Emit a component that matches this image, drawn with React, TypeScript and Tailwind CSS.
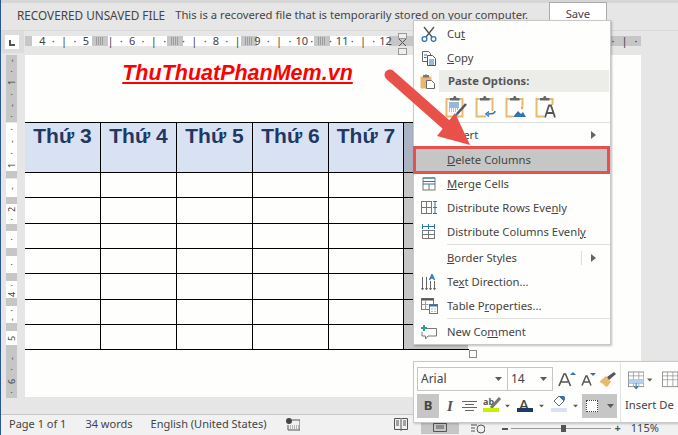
import React from "react";

const ui = "font-['Noto_Sans',sans-serif]";

const hSegs = [
  { left: "w-[60px]", tokens: ["4", "·", "|", "·", "5"], pad: "pl-[5px]" },
  { left: "w-[59px]", tokens: ["|", "·", "6", "·", "|", "·"], pad: "-ml-[3px]" },
  { left: "w-[58px]", tokens: ["·", "|", "·", "8", "·", "|"], pad: "-ml-[5px]" },
  { left: "w-[57px]", tokens: ["9", "·", "|", "·", "10", "·"], pad: "-ml-[5px]" },
  { left: "w-[59px]", tokens: ["·", "11", "·", "|", "·", "12"], pad: "-ml-[5px]" },
];

const vSegs = [
  { cls: "h-[67px] bg-[#c6c6c6]", t: ["-", "·", "1", "·", "-", "·"] },
  { cls: "h-[48px] mt-px bg-white", t: ["·", "-", "·", "1"] },
  { cls: "h-[7px] bg-[#c6c6c6]", t: [] },
  { cls: "h-[18px] mt-px bg-white", t: ["-"] },
  { cls: "h-[7px] bg-[#c6c6c6]", t: [] },
  { cls: "h-[20px] bg-white", t: ["2", "·"] },
  { cls: "h-[7px] bg-[#c6c6c6]", t: [] },
  { cls: "h-[17px] bg-white", t: ["·"] },
  { cls: "h-[8px] bg-[#c6c6c6]", t: [] },
  { cls: "h-[17px] bg-white", t: ["·"] },
  { cls: "h-[8px] bg-[#c6c6c6]", t: [] },
  { cls: "h-[17px] bg-white", t: ["·", "4"] },
  { cls: "h-[8px] bg-[#c6c6c6]", t: [] },
  { cls: "h-[17px] bg-white", t: ["·", "-"] },
  { cls: "h-[8px] bg-[#c6c6c6]", t: [] },
  { cls: "h-[14px] bg-white", t: ["5"] },
  { cls: "h-[8px] bg-[#c6c6c6]", t: [] },
  { cls: "h-[45px] bg-[#c6c6c6]", t: ["-", "·", "6", "·"] },
];

const rowHeights = ["h-[50px]", "h-[25px]", "h-[26px]", "h-[25px]", "h-[25px]", "h-[26px]", "h-[25px]", "h-[25px]"];
const days = ["Thứ 3", "Thứ 4", "Thứ 5", "Thứ 6", "Thứ 7", ""];
const colWidths = ["w-[76px]", "w-[76px]", "w-[76px]", "w-[76px]", "w-[75px]", "w-[64px]"];

const Caret = ({ className = "" }: { className?: string }) => (
  <svg width="7" height="4" viewBox="0 0 7 4" className={className}>
    <path d="M0 0h7L3.5 4z" fill="#5a5a5a" />
  </svg>
);

const Ico = ({ children, w = 20, h = 20, className = "" }: { children: React.ReactNode; w?: number; h?: number; className?: string }) => (
  <svg width={w} height={h} viewBox={`0 0 ${w} ${h}`} fill="none" className={className}>
    {children}
  </svg>
);

// the dotted margin grip in the grey gaps of the ruler
const RulerGrip = () => (
  <div className="w-4 h-full flex items-center justify-center">
    <Ico w={8} h={8}>
      <path d="M0 1h8M0 3h8M0 5h8M0 7h8" stroke="#777" strokeDasharray="1 1" />
    </Ico>
  </div>
);

const ScissorsIcon = () => (
  <Ico w={16} h={16}>
    <path d="M3 1l8 10M13 1L5 11" stroke="#555" strokeWidth="1.4" />
    <circle cx="3.5" cy="13" r="2.4" stroke="#2e75b6" strokeWidth="1.3" />
    <circle cx="12.5" cy="13" r="2.4" stroke="#2e75b6" strokeWidth="1.3" />
  </Ico>
);

const CopyIcon = () => (
  <Ico w={16} h={15}>
    <path d="M1.5.5h6l2 2v8h-8z" fill="#fff" stroke="#666" />
    <path d="M6.5 4.5h5l3 3v7h-8z" fill="#fff" stroke="#555" />
    <path d="M3 4h3M3 6.5h2.5M8 9h5M8 11h5M8 13h5" stroke="#2e75b6" />
  </Ico>
);

// clipboard base shared by every paste icon
const Clip = ({ children }: { children?: React.ReactNode }) => (
  <Ico w={22} h={23}>
    <path d="M1.500 4h16v17.500h-16z" fill="#fefefc" stroke="#e8b971" strokeWidth="2" />
    <path d="M5 5.500V3h3l1-2h1.500l1 2h3v2.500H5z" fill="#666" />
    {children}
  </Ico>
);

const MergeIcon = () => (
  <Ico w={14} h={14}>
    <rect x="1" y="1" width="12" height="12" stroke="#777" />
    <path d="M1 7h12M1 4.500h12" stroke="#2e75b6" />
    <path d="M1 1h12" stroke="#2e75b6" />
    <path d="M7 7v6" stroke="#777" />
  </Ico>
);

const DistRowsIcon = () => (
  <Ico w={17} h={14}>
    <rect x=".5" y=".5" width="10" height="12" stroke="#777" />
    <path d="M.5 6.500h10M5.500.5v12" stroke="#777" />
    <path d="M12 .5h4M12 6.500h4M12 12.500h4M14 .5v12" stroke="#2e75b6" />
  </Ico>
);

const DistColsIcon = () => (
  <Ico w={14} h={16}>
    <rect x=".5" y="6.500" width="12" height="8" stroke="#777" />
    <path d="M.5 10.500h12M6.500 6.500v8" stroke="#777" />
    <path d="M.5 0v5M6.500 0v5M12.500 0v5M.5 2.500h12" stroke="#2e75b6" />
  </Ico>
);

const TextDirIcon = () => (
  <Ico w={16} h={17}>
    <path d="M1.500 3v12M5.500 3v12M9.500 7v8M13.500 7v8" stroke="#666" />
    <path d="M.5 14l1 2 1-2M4.500 14l1 2 1-2M8.500 14l1 2 1-2M12.500 14l1 2 1-2" stroke="#666" />
    <path d="M8.500 6l2.500-5.500L13.500 6M9.500 4h3" stroke="#2e75b6" strokeWidth="1.400" />
  </Ico>
);

const TablePropsIcon = () => (
  <Ico w={17} h={16}>
    <rect x=".5" y=".5" width="12" height="11" fill="#fff" stroke="#777" />
    <path d="M.5 1.500h12" stroke="#555" strokeWidth="2" />
    <path d="M.5 6.500h7M4.500 3v9" stroke="#999" />
    <rect x="8.500" y="6.500" width="8" height="9" fill="#fff" stroke="#777" />
    <path d="M8.500 7.500h8" stroke="#2e75b6" strokeWidth="2" />
    <path d="M10.500 11h1M13.500 11h1M10.500 13.500h1M13.500 13.500h1" stroke="#777" />
  </Ico>
);

const CommentIcon = () => (
  <Ico w={16} h={15}>
    <path d="M5 3.500h10.500v7.500H7l-2.500 3v-3H1V7" stroke="#777" />
    <path d="M3 0v6M0 3h6" stroke="#2f9e8f" strokeWidth="2" />
  </Ico>
);

const menuTop = [
  { icon: <ScissorsIcon />, label: <>Cu<u>t</u></> },
  { icon: <CopyIcon />, label: <><u>C</u>opy</> },
];

const menuMid = [
  { icon: <MergeIcon />, label: <><u>M</u>erge Cells</> },
  { icon: <DistRowsIcon />, label: <>Distribute Rows Eve<u>n</u>ly</> },
  { icon: <DistColsIcon />, label: <>Distribute Columns Evenl<u>y</u></> },
];

const menuLow = [
  { icon: <TextDirIcon />, label: <>Te<u>x</u>t Direction...</> },
  { icon: <TablePropsIcon />, label: <>Table P<u>r</u>operties...</> },
];

const MenuRow = ({ icon, label }: { icon?: React.ReactNode; label: React.ReactNode }) => (
  <div className="h-6 flex items-center">
    <div className="w-[33px] flex justify-center pr-[3px]">{icon}</div>
    <span>{label}</span>
  </div>
);

const SubArrow = () => (
  <svg width="5" height="8" viewBox="0 0 5 8">
    <path d="M0 0l5 4-5 4z" fill="#666" />
  </svg>
);

const ContextMenu = () => (
  <div className={`absolute left-[412px] top-5 w-[198px] h-[325px] pt-px bg-[#fefefc] border border-[#c8c8c8] shadow-[1px_1px_2px_rgba(0,0,0,0.25)] text-[#444] text-[11.25px] ${ui}`}>
    {menuTop.map((m, i) => (
      <MenuRow key={i} icon={m.icon} label={m.label} />
    ))}
    <div className="h-[22px] flex items-center">
      <div className="w-[25px] flex justify-end pr-[3px]">
        <Ico w={16} h={15}>
          <path d="M.5 2.500h11v12H.5z" fill="#e8b971" />
          <path d="M3 2.500V1h2.500V0h1v1H9v2.500H3z" fill="#777" />
          <path d="M6.500 6.500h5l3 3v5h-8z" fill="#fff" stroke="#666" />
        </Ico>
      </div>
      <div className="w-[170px] h-full pl-[9px] flex items-center bg-[#ecece9] font-bold text-[#555]">Paste Options:</div>
    </div>
    <div className="h-[30px] pl-[31px] pt-[3px] flex gap-2">
      <Clip>
        <path d="M4 8h10M4 10h10M4 12h10" stroke="#2e75b6" />
        <path d="M4 14h10M4 16h7" stroke="#e2603f" strokeDasharray="1 1" />
        <path d="M21 9L12 19" stroke="#555" strokeWidth="2.500" />
        <path d="M11 18l2 2-3 2z" fill="#2e75b6" />
      </Clip>
      <Clip>
        <path d="M11 16h10v7H11z" fill="#fefefc" />
        <path d="M20 16c0 3-3 3-7 3M14 16.500L11 19l3 2.500" stroke="#2e75b6" strokeWidth="1.500" />
      </Clip>
      <Clip>
        <rect x="8" y="12" width="13" height="11" fill="#fefefc" />
        <path d="M8 22l5-6 3 3 2-2 3 5z" fill="#2e75b6" />
        <circle cx="17" cy="13" r="1.200" fill="#e8a050" />
      </Clip>
      <Clip>
        <rect x="9" y="10" width="13" height="13" fill="#fefefc" />
        <path d="M10 22.500l4-12h2l4 12M12 18h6" stroke="#555" strokeWidth="1.800" />
      </Clip>
    </div>
    <div className="ml-[33px] h-px bg-[#e0e0e0]" />
    <div className="h-6 flex items-center pr-[14px]">
      <span className="pl-[33px] flex-1">Insert</span>
      <SubArrow />
    </div>
    <div className="-ml-px -mt-px -mb-[2px] w-[197px] h-[28px] flex items-center bg-[#c6c6c6] border-[3px] border-[#e8504a] pl-[31px]">
      <span><u>D</u>elete Columns</span>
    </div>
    {menuMid.map((m, i) => (
      <MenuRow key={i} icon={m.icon} label={m.label} />
    ))}
    <div className="ml-[33px] mb-px h-px bg-[#e0e0e0]" />
    <div className="h-6 flex items-center pr-[14px]">
      <span className="pl-[33px] flex-1"><u>B</u>order Styles</span>
      <div className="w-px h-[14px] bg-[#ddd] mr-[9px]" />
      <SubArrow />
    </div>
    {menuLow.map((m, i) => (
      <MenuRow key={i} icon={m.icon} label={m.label} />
    ))}
    <div className="ml-[33px] mb-px h-px bg-[#e0e0e0]" />
    <MenuRow icon={<CommentIcon />} label={<>New Co<u>m</u>ment</>} />
  </div>
);

const MiniToolbar = () => (
  <div className={`absolute left-[412px] top-[361px] w-[266px] h-[62px] flex bg-[#fefefc] border border-[#c8c8c8] shadow-[1px_1px_2px_rgba(0,0,0,0.2)] text-[#444] ${ui}`}>
    <div className="w-[206px] pl-[3px] pt-[5px]">
      <div className="flex items-center h-6">
        <div className="w-[91px] h-6 border border-[#c6c6c6] pl-[3px] pr-[5px] flex items-center justify-between text-[12px]">
          Arial <Caret />
        </div>
        <div className="w-[46px] -ml-px h-6 border border-[#c6c6c6] pl-[3px] pr-[5px] flex items-center justify-between text-[12px]">
          14 <Caret />
        </div>
        <Ico w={18} h={16} className="ml-[5px]">
          <path d="M1 15L6 3h1.500l5 12M3 11h7" stroke="#555" strokeWidth="1.600" />
          <path d="M12 4l3-3 3 3z" fill="#2e75b6" />
        </Ico>
        <Ico w={16} h={14} className="ml-[5px]">
          <path d="M1 13.500L5 4h1l4 9.500M3 10h5" stroke="#555" strokeWidth="1.500" />
          <path d="M9 1h6l-3 3z" fill="#2e75b6" />
        </Ico>
        <Ico w={16} h={15} className="ml-[3px]">
          <path d="M0 9l6-5 5 6-4 5-2-1-2-2-3-2z" fill="#e8b971" />
          <path d="M7 5l2 3 7-6-2-2z" fill="#555" />
        </Ico>
      </div>
      <div className="flex items-center h-6 mt-[3px]">
        <div className="w-[22px] h-6 bg-[#c6c6c6] flex items-center justify-center text-[13px] font-bold text-[#444]">B</div>
        <div className="w-[22px] text-center font-['Liberation_Serif',serif] italic font-bold text-[15px] text-[#555]">I</div>
        <Ico w={15} h={10} className="ml-[1px]">
          <path d="M0 .5h15M3 3.500h9M0 6.500h15M3 9.500h9" stroke="#666" />
        </Ico>
        <div className="relative w-[16px] h-6 ml-[6px]">
          <span className="absolute left-0 top-[1px] text-[9px] font-bold text-[#555]">ab</span>
          <Ico w={12} h={12} className="absolute left-[7px] top-[3px]">
            <path d="M1 11L10 1" stroke="#777" strokeWidth="3" />
          </Ico>
          <div className="absolute left-0 top-[14px] w-4 h-1 bg-[#c6f000]" />
        </div>
        <Caret className="ml-[5px] scale-75" />
        <div className="relative w-4 h-6 ml-[6px]">
          <span className="absolute left-[2px] -top-[1px] text-[15px] font-medium text-[#444]">A</span>
          <div className="absolute left-0 top-[14px] w-4 h-1 bg-[#1f3864]" />
        </div>
        <Caret className="ml-[5px] scale-75" />
        <div className="relative w-4 h-6 ml-[6px]">
          <Ico w={16} h={14} className="absolute left-0 top-0">
            <path d="M3 7l5-5 5 5-5 5z" fill="#fff" stroke="#666" />
            <path d="M8 2l5 5c1-1 2-3 0-5z" fill="#2e75b6" />
          </Ico>
          <div className="absolute left-0 top-[14px] w-4 h-1 bg-[#d9e2f3]" />
        </div>
        <Caret className="ml-[5px] scale-75" />
        <div className="w-[35px] h-6 ml-[3px] bg-[#c6c6c6] flex items-center pl-1 gap-[9px]">
          <div className="w-3 h-3 bg-white border border-dotted border-[#444]" />
          <Caret />
        </div>
      </div>
    </div>
    <div className="w-px bg-[#e4e4e4]" />
    <div className="flex-1 overflow-hidden pt-[7px] pl-[4px]">
      <div className="flex items-start">
        <Ico w={21} h={23} className="ml-[3px]">
          <rect x=".5" y=".5" width="20" height="19" fill="#fff" stroke="#777" />
          <path d="M7 .5v19M14 .5v19M.5 5.500h20M.5 10.500h20M.5 15h20" stroke="#999" />
          <rect x="1" y="10" width="19" height="5" fill="#b8d0e8" />
          <path d="M10.500 15v6M8 19l2.500 3 2.500-3" stroke="#2e75b6" strokeWidth="1.300" />
        </Ico>
        <Caret className="ml-[3px] mt-[9px]" />
        <Ico w={21} h={23} className="ml-[9px]">
          <rect x=".5" y=".5" width="20" height="19" fill="#fff" stroke="#777" />
          <path d="M7 .5v19M14 .5v19M.5 5.500h20M.5 10.500h20" stroke="#999" />
        </Ico>
      </div>
      <div className="flex gap-[3px] mt-[5px] text-[11.250px] whitespace-nowrap">
        <span>Insert</span>
        <span>De</span>
      </div>
    </div>
  </div>
);

const MoveMarker = () => (
  <svg width="10" height="22" viewBox="0 0 10 22" className="absolute left-[397px] top-[33px]">
    <rect x=".5" y=".5" width="8" height="5" fill="#eee" stroke="#999" />
    <path d="M1 6l7 7M8 6l-7 7" stroke="#555" />
    <rect x=".5" y="15.500" width="8" height="6" fill="#eee" stroke="#999" />
  </svg>
);

const Arrow = () => (
  <svg width="100" height="90" viewBox="380 65 100 90" className="absolute left-[379px] top-[65px]">
    <path d="M390 75L450 128" stroke="#e8504a" strokeWidth="11" strokeLinecap="round" />
    <path d="M470 145L437 136L455 113z" fill="#e8504a" />
  </svg>
);

export default function App() {
  return (
    <div className={`relative w-[678px] h-[435px] overflow-hidden flex flex-col bg-[#e6e6e6] border-l border-[#2b579a] ${ui}`}>
      <div className="h-[3px] bg-[#d6d6d6]" />

      {/* message bar */}
      <div className="h-[28px] flex items-center pl-4 border-b border-[#d8d8d8] text-[#444] whitespace-nowrap">
        <span className="text-[11.750px] -mt-[2px]">RECOVERED UNSAVED FILE</span>
        <span className="ml-[10px] text-[11.250px] -mt-[2px]">This is a recovered file that is temporarily stored on your computer.</span>
        <div className="ml-[21px] w-[58px] h-[25px] -mt-1 bg-white border border-[#ababab] flex items-center justify-center text-[11.250px]">Save</div>
      </div>

      {/* horizontal ruler */}
      <div className="h-6 flex">
        <div className="w-[23px] h-[22px] bg-[#dcdcdc] pl-1 pt-1">
          <div className="w-[14px] h-[14px] bg-white flex items-end justify-center pb-[3px]">
            <div className="w-[6px] h-[6px] border-l-2 border-b-2 border-[#555]" />
          </div>
        </div>
        <div className="w-[616px] h-[10px] mt-[5px] ml-px bg-[#c6c6c6] flex pl-[7px] text-[11px] leading-[10px] text-[#444]">
          {hSegs.map((s, i) => (
            <React.Fragment key={i}>
              <div className={`${s.left} h-full bg-white`}>
                <div className={`flex ${s.pad}`}>
                  {s.tokens.map((t, j) => (
                    <span key={j} className="w-[10.850px] shrink-0 text-center">{t}</span>
                  ))}
                </div>
              </div>
              {i < hSegs.length - 1 && <RulerGrip />}
            </React.Fragment>
          ))}
          <div className="ml-auto w-[33px] flex justify-around">
            <span>·</span>
            <span>|</span>
            <span>·</span>
          </div>
        </div>
      </div>

      {/* body */}
      <div className="flex-1 min-h-0 flex pb-[17px]">
        <div className="w-6 pl-[5px]">
          <div className="w-[11px] flex flex-col text-[9px] leading-[9px] text-[#444]">
            {vSegs.map((s, i) => (
              <div key={i} className={`${s.cls} flex flex-col items-center justify-around overflow-hidden`}>
                {s.t.map((t, j) => (
                  <span key={j} className="-rotate-90 block">{t}</span>
                ))}
              </div>
            ))}
          </div>
        </div>

        <div className="w-[616px] bg-[#fefefc]">
          <div className="w-[425px] h-[67px] pt-[2px] text-center">
            <span className="font-['Liberation_Sans',sans-serif] font-bold italic underline text-[21.500px] text-[#ff0000]">ThuThuatPhanMem.vn</span>
          </div>
          <div className="w-[444px] border-t border-black">
            {rowHeights.map((h, r) => (
              <div key={r} className={`${h} flex border-b border-black`}>
                {colWidths.map((w, c) => {
                  const last = c === colWidths.length - 1;
                  if (r === 0) {
                    return (
                      <div
                        key={c}
                        className={`${w} ${last ? "bg-[#aab3c3]" : "bg-[#d9e2f3] border-r border-black"} text-center font-['Liberation_Sans',sans-serif] font-bold text-[21px] leading-[26px] text-[#1f3864]`}
                      >
                        {days[c]}
                      </div>
                    );
                  }
                  return <div key={c} className={`${w} ${last ? "bg-[#c6c6c6]" : "border-r border-black"}`} />;
                })}
              </div>
            ))}
          </div>
        </div>
      </div>

      {/* status bar */}
      <div className="h-[21px] flex items-center pl-2 pb-px bg-[#f1f1f1] border-t border-[#c6c6c6] text-[11px] text-[#444] whitespace-nowrap">
        <span>Page 1 of 1</span>
        <span className="ml-[19px]">34 words</span>
        <span className="ml-[18px]">English (United States)</span>
        <Ico w={14} h={13} className="ml-[19px]">
          <circle cx="3" cy="3" r="3" fill="#444" />
          <path d="M6 2h8v10H2V7" stroke="#555" />
          <path d="M4 8h9M4 10h9" stroke="#777" strokeDasharray="1 1" />
        </Ico>
        <Ico w={14} h={13} className="ml-[94px]">
          <path d="M.5.5h6l.5 1 .5-1h6v11h-6l-.5 1-.5-1h-6zM7 2v10M2 3h3M2 5h3M2 7h3M9 3h3M9 5h3M9 7h3" stroke="#555" />
        </Ico>
        <div className="ml-[13px] w-[38px] h-full bg-[#c6c6c6] flex items-end justify-center pb-[2px]">
          <Ico w={14} h={9}>
            <path d="M.5.5h13v8h-13zM3 3h8M3 5h8" stroke="#555" />
          </Ico>
        </div>
        <Ico w={14} h={10} className="ml-3 mt-2">
          <path d="M0 1h6M0 4h4M0 7h4" stroke="#555" />
          <circle cx="10" cy="5" r="4" stroke="#555" />
        </Ico>
        <div className="ml-[17px] w-[6px] h-[2px] mt-2 bg-[#555]" />
        <div className="relative ml-[3px] w-[100px] h-px mt-2 bg-[#999]">
          <div className="absolute left-[50px] -top-[3px] w-[5px] h-[7px] bg-[#555]" />
        </div>
        <span className="ml-[4px] mt-2 text-[#555] font-bold">+</span>
        <span className="ml-[10px] mt-2">115%</span>
      </div>

      <MoveMarker />
      {/* table resize handle */}
      <div className="absolute left-[468px] top-[350px] w-2 h-2 bg-white border border-[#8a8a8a]" />
      <ContextMenu />
      <Arrow />
      <MiniToolbar />
    </div>
  );
}
